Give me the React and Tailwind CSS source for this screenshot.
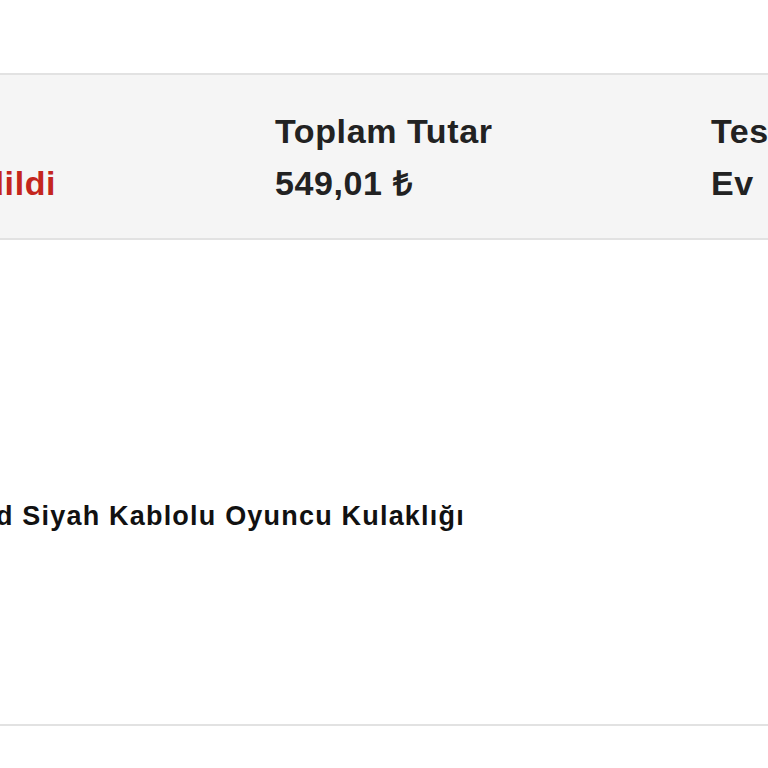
export default function App() {
  const font = { fontFamily: '"Liberation Sans", Arial, sans-serif' }

  return (
    <main className="w-[768px] h-[768px] overflow-hidden bg-white text-[#222]" style={font}>
      <div className="h-[73px]" />

      {/* Özet bandı */}
      <section className="h-[167px] bg-[#f5f5f5] border-y-2 border-[#e2e2e2] overflow-hidden">
        <div className="flex -ml-[123px] pt-[30px] font-bold text-[34px] leading-[52px] tracking-[0.6px]">
          <div className="w-[398px] shrink-0 whitespace-nowrap">
            <p>Durum</p>
            <p className="text-[#c4261d]">İptal Edildi</p>
          </div>
          <div className="w-[436px] shrink-0 whitespace-nowrap">
            <p>Toplam Tutar</p>
            <p>549,01 ₺</p>
          </div>
          <div className="w-[436px] shrink-0 whitespace-nowrap">
            <p>Teslimat Adresi</p>
            <p>Ev</p>
          </div>
        </div>
      </section>

      {/* Ürün satırı */}
      <section className="h-[486px] border-b-2 border-[#e2e2e2] overflow-hidden">
        <p className="-ml-[38px] pt-[261px] whitespace-nowrap font-bold text-[27px] leading-[30px] tracking-[1.2px] text-[#111]">
          Led Siyah Kablolu Oyuncu Kulaklığı
        </p>
      </section>
    </main>
  )
}
